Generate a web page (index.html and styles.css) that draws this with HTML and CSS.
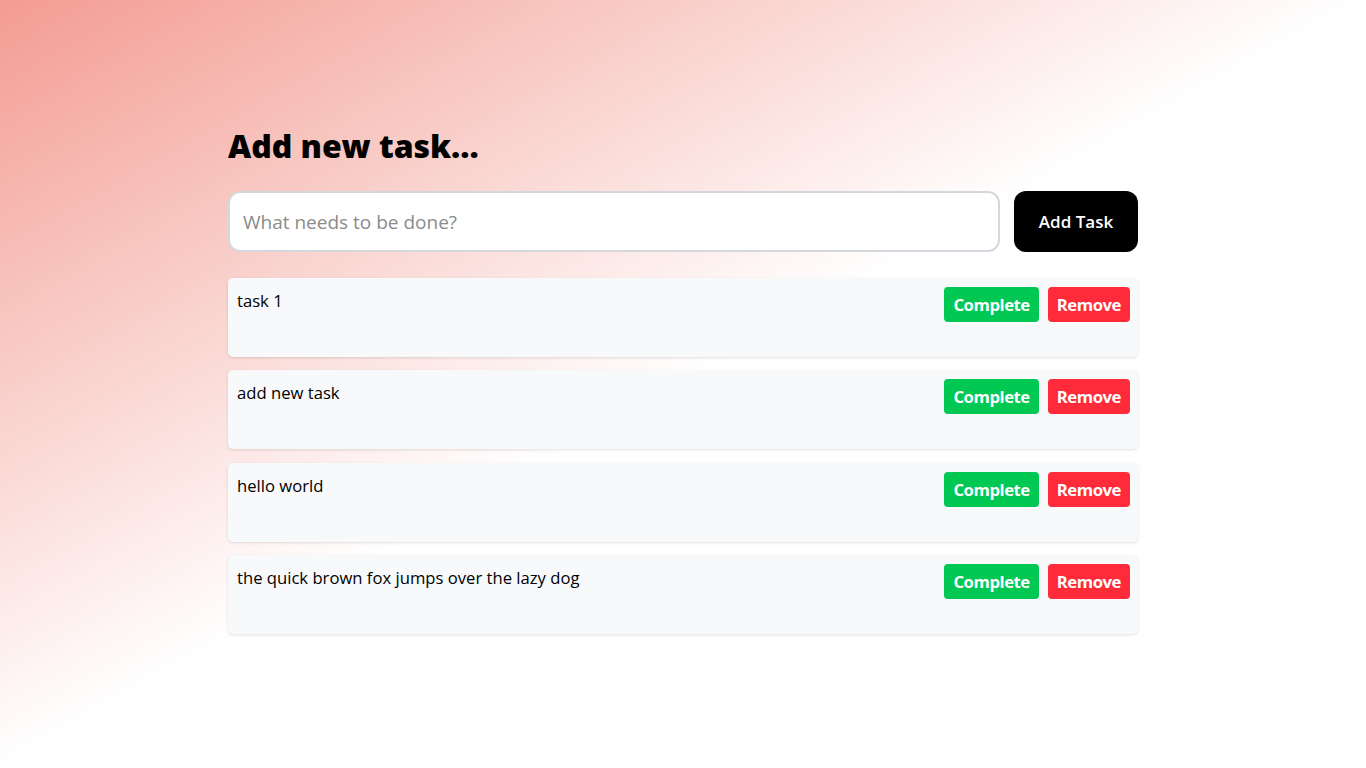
FILE: index.html
```html
<!DOCTYPE html>
<html lang="en">
<head>
<meta charset="utf-8">
<title>Todo</title>
<link rel="stylesheet" href="styles.css">
</head>
<body>
<main class="app">
  <h1 class="title">Add new task...</h1>
  <form class="new-task" onsubmit="return false;">
    <input class="new-task-input" type="text" placeholder="What needs to be done?">
    <button class="add-btn" type="submit">Add Task</button>
  </form>
  <ul class="tasks">
    <li class="task">
      <span class="task-text">task 1</span>
      <div class="task-actions">
        <button class="btn btn-complete">Complete</button>
        <button class="btn btn-remove">Remove</button>
      </div>
    </li>
    <li class="task">
      <span class="task-text">add new task</span>
      <div class="task-actions">
        <button class="btn btn-complete">Complete</button>
        <button class="btn btn-remove">Remove</button>
      </div>
    </li>
    <li class="task">
      <span class="task-text">hello world</span>
      <div class="task-actions">
        <button class="btn btn-complete">Complete</button>
        <button class="btn btn-remove">Remove</button>
      </div>
    </li>
    <li class="task">
      <span class="task-text">the quick brown fox jumps over the lazy dog</span>
      <div class="task-actions">
        <button class="btn btn-complete">Complete</button>
        <button class="btn btn-remove">Remove</button>
      </div>
    </li>
  </ul>
</main>
</body>
</html>
```

FILE: styles.css
```css
* { box-sizing: border-box; }

html, body { height: 100%; }

body {
  margin: 0;
  min-height: 100vh;
  font-family: "Open Sans", "Noto Sans", sans-serif;
  color: #000;
  background: linear-gradient(to bottom right, #f39c92 0%, #ffffff 50%);
}

.app {
  width: 910px;
  margin: 0 auto;
  padding-top: 124px;
}

.title {
  margin: 0;
  font-size: 32px;
  line-height: 44px;
  font-weight: 800;
  letter-spacing: -0.05px;
}

.new-task {
  display: flex;
  gap: 14px;
  margin-top: 23px;
}

.new-task-input {
  flex: 1;
  height: 61px;
  border: 2px solid #d4d8de;
  border-radius: 12px;
  background: #fff;
  padding: 0 13px;
  font-family: inherit;
  font-size: 19px;
  color: #000;
  outline: none;
}

.new-task-input::placeholder { color: #8b8b8b; }

.add-btn {
  width: 124px;
  height: 61px;
  border: 0;
  border-radius: 12px;
  background: #000;
  color: #fff;
  font-family: inherit;
  font-size: 17px;
  font-weight: 600;
  cursor: pointer;
}

.tasks {
  list-style: none;
  margin: 26px 0 0;
  padding: 0;
  display: flex;
  flex-direction: column;
  gap: 13.3px;
}

.task {
  display: flex;
  justify-content: space-between;
  align-items: flex-start;
  height: 79px;
  padding: 9px 8px 9px 9px;
  background: #f8f9fb;
  border-radius: 5px;
  box-shadow: 0 1px 3px rgba(0, 0, 0, 0.12);
}

.task-text {
  font-size: 16.65px;
  line-height: 26px;
  padding-top: 1px;
}

.task-actions {
  display: flex;
  gap: 9px;
}

.btn {
  height: 35px;
  padding: 0 9px;
  border: 0;
  border-radius: 4px;
  color: #fff;
  font-family: inherit;
  font-size: 16.7px;
  font-weight: 700;
  letter-spacing: -0.45px;
  cursor: pointer;
}

.btn-complete { background: #00c853; }
.btn-remove { background: #ff2b3a; }
```
